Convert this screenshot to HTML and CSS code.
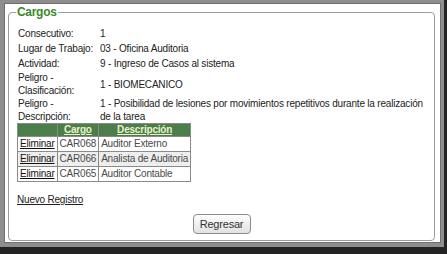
FILE: index.html
```html
<!DOCTYPE html>
<html>
  <head>
    <title>Cargos</title>
    <link rel="stylesheet" href="styles.css">
  </head>
  <body>
    <div class="frame">
      <div class="window">
        <fieldset class="panel">
          <legend>Cargos</legend>

          <table class="details">
            <tr><td class="label">Consecutivo:</td><td>1</td></tr>
            <tr><td class="label">Lugar de Trabajo:</td><td>03 - Oficina Auditoria</td></tr>
            <tr><td class="label">Actividad:</td><td>9 - Ingreso de Casos al sistema</td></tr>
            <tr><td class="label">Peligro -<br>Clasificación:</td><td>1 - BIOMECANICO</td></tr>
            <tr><td class="label">Peligro -<br>Descripción:</td><td>1 - Posibilidad de lesiones por movimientos repetitivos durante la realización de la tarea</td></tr>
          </table>

          <table class="grid">
            <tr>
              <th></th>
              <th><a href="#">Cargo</a></th>
              <th><a href="#">Descripción</a></th>
            </tr>
            <tr>
              <td><a href="#">Eliminar</a></td>
              <td>CAR068</td>
              <td>Auditor Externo</td>
            </tr>
            <tr class="alt">
              <td><a href="#">Eliminar</a></td>
              <td>CAR066</td>
              <td>Analista de Auditoria</td>
            </tr>
            <tr>
              <td><a href="#">Eliminar</a></td>
              <td>CAR065</td>
              <td>Auditor Contable</td>
            </tr>
          </table>

          <p class="new"><a href="#">Nuevo Registro</a></p>

          <div class="actions">
            <button type="button">Regresar</button>
          </div>
        </fieldset>
      </div>
    </div>
  </body>
</html>
```

FILE: styles.css
```css
html{
  background: linear-gradient(#232323 249px, #6e6e6e 254px);
}
body{
  margin: 0;
  font-family: "Liberation Sans", Arial, sans-serif;
  font-size: 10px;
  letter-spacing: -0.2px;
  color: #222;
}
.frame{
  width: 444px;
  height: 247px;
  box-sizing: border-box;
  padding: 3px 3px 4px 4px;
  background: #8e8e8e;
}
.window{
  height: 100%;
  box-sizing: border-box;
  display: flex;
  flex-direction: column;
  padding: 1px 5px 1px 3px;
  background: #fff;
  border: 1px solid #707070;
}
.panel{
  flex: 1;
  margin: 0;
  padding: 7px 8px 5px 8px;
  border: 1px solid #9c9c9c;
  border-radius: 4px;
  min-width: 0;
}
.panel legend{
  margin-left: -1px;
  padding: 0 1px;
  font-size: 12px;
  line-height: 14px;
  font-weight: bold;
  letter-spacing: -0.3px;
  color: #3a8a28;
}
.details{
  width: 100%;
  border-collapse: collapse;
}
.details td{
  height: 15px;
  padding: 0 1px;
  line-height: 13px;
  vertical-align: middle;
}
.details .label{
  width: 80px;
}
.grid{
  border-collapse: collapse;
  border: 1px solid #8a8a8a;
  color: #4a4a4a;
}
.grid th{
  height: 12px;
  padding: 0 2px;
  line-height: 12px;
  background: #4b7e4b;
  border: 1px solid #8a8a8a;
}
.grid th a{
  color: #eaf2c8;
  font-weight: bold;
}
.grid td{
  height: 14px;
  padding: 0 2px;
  line-height: 14px;
  border: 1px solid #8a8a8a;
  white-space: nowrap;
}
.grid td a{
  color: #111;
}
.grid .alt td{
  background: #eeeeee;
}
.new{
  margin: 11px 0 0 0;
  line-height: 13px;
}
.new a{
  color: #222;
}
.actions{
  margin-top: 8px;
  text-align: center;
}
.actions button{
  width: 58px;
  height: 20px;
  padding: 0;
  font-family: "Liberation Sans", Arial, sans-serif;
  font-size: 11px;
  letter-spacing: -0.2px;
  color: #333;
  background: linear-gradient(#fdfdfd, #e2e2e2);
  border: 1px solid #8c8c8c;
  border-radius: 4px;
}
```
